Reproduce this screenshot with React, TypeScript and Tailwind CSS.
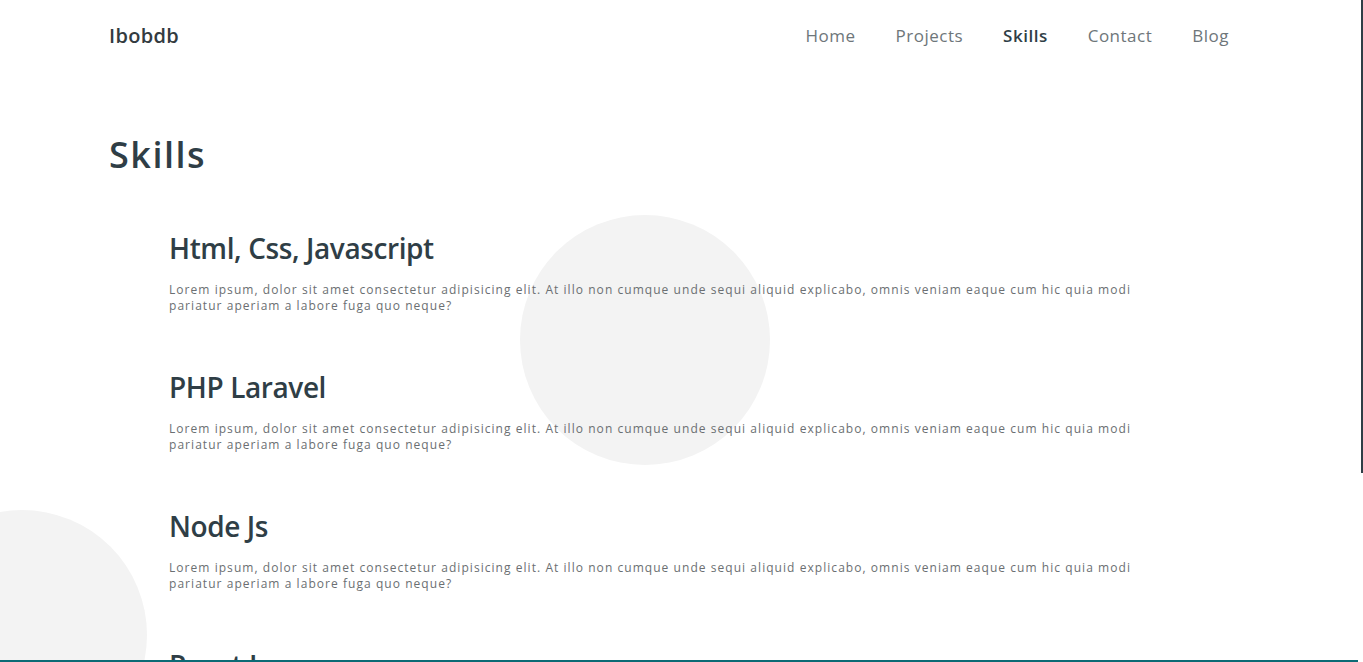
import React from 'react'

// nav links — "Skills" is the current page
const links = ['Home', 'Projects', 'Skills', 'Contact', 'Blog']

const skills = ['Html, Css, Javascript', 'PHP Laravel', 'Node Js', 'React Js']

const lorem =
  'Lorem ipsum, dolor sit amet consectetur adipisicing elit. At illo non cumque unde sequi aliquid explicabo, omnis veniam eaque cum hic quia modi pariatur aperiam a labore fuga quo neque?'

const font = { fontFamily: "'Open Sans', 'Noto Sans', sans-serif" }

export default function App() {
  return (
    <div style={font} className="relative h-[662px] overflow-hidden bg-white text-[#2f3e46]">
      {/* background circles */}
      <div className="absolute left-[520px] top-[215px] h-[250px] w-[250px] rounded-full bg-[#f3f3f3]" />
      <div className="absolute left-[-103px] top-[510px] h-[250px] w-[250px] rounded-full bg-[#f3f3f3]" />

      <div className="relative pl-[109px] pr-[134px]">
        {/* NAVBAR */}
        <header className="flex h-[72px] items-center justify-between">
          <span className="text-[20px] font-semibold tracking-[0.3px] text-[#333b40]">Ibobdb</span>
          <nav className="flex items-center gap-[40px]">
            {links.map((l) => (
              <a
                key={l}
                className={`text-[17px] tracking-[0.5px] ${l === 'Skills' ? 'font-semibold text-[#2f3e46]' : 'text-[#6e767a]'}`}
              >
                {l}
              </a>
            ))}
          </nav>
        </header>

        <h1 className="mt-[58px] text-[36px] font-semibold leading-[50px] tracking-[1.5px]">Skills</h1>

        {/* SKILL LIST */}
        <div className="mt-[50px] flex flex-col gap-[55px] pl-[60px]">
          {skills.map((s) => (
            <div key={s}>
              <h2 className="text-[28px] font-semibold leading-[36px] tracking-[-0.4px]">{s}</h2>
              <p className="mt-[16px] max-w-[990px] text-[12px] leading-[16px] tracking-[1.05px] text-[#6b6f72]">
                {lorem}
              </p>
            </div>
          ))}
        </div>
      </div>

      {/* scroll indicators */}
      <div className="fixed right-0 top-0 h-[473px] w-[2px] bg-[#2f3e46]" />
      <div className="fixed bottom-0 left-0 h-[2px] w-[1358px] bg-[#0b6a75]" />
    </div>
  )
}
